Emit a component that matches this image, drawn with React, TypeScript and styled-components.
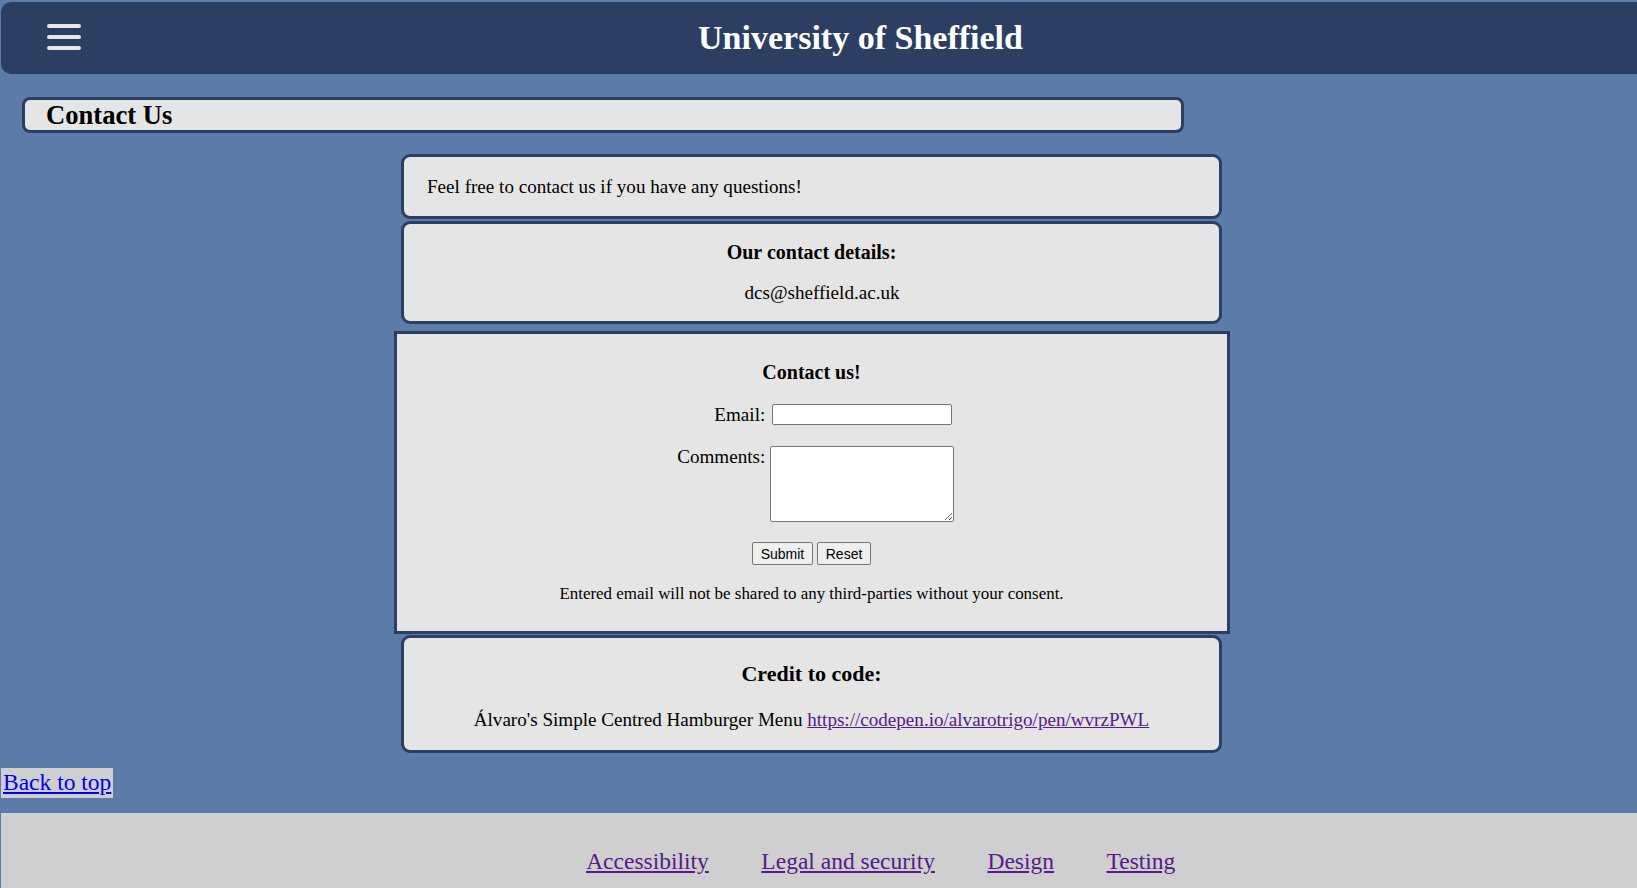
import React from "react";
import styled, { createGlobalStyle } from "styled-components";

const GlobalStyle = createGlobalStyle`
  html {
    background: #5b7ca8;
  }
  body {
    margin: 2px 0 0 1px;
    background: #5b7ca8;
    font-family: "Liberation Serif", "Times New Roman", serif;
    font-size: 19.1px;
    color: #000;
  }
  ::-webkit-scrollbar {
    width: 7px;
    height: 7px;
    background: #f0f0f0;
  }
  ::-webkit-scrollbar-thumb {
    background: #c2c2c2;
    border: 1px solid #f0f0f0;
  }
  ::-webkit-scrollbar-corner {
    background: #f0f0f0;
  }
`;

const Header = styled.header`
  display: grid;
  grid-template-columns: 1fr auto 1fr;
  align-items: center;
  box-sizing: border-box;
  width: calc(100% + 83px);
  height: 72px;
  padding: 0 46px;
  background: #2c3e61;
  border-radius: 10px;
`;

const Burger = styled.div`
  justify-self: start;
  display: flex;
  flex-direction: column;
  gap: 7.5px;
  margin-top: -2px;
`;

const BurgerBar = styled.span`
  display: block;
  width: 34px;
  height: 3.5px;
  border-radius: 2px;
  background: #e8e8e8;
`;

const SiteTitle = styled.h1`
  margin: 0;
  font-size: 34px;
  font-weight: bold;
  color: #ffffff;
  white-space: nowrap;
`;

const PageTitle = styled.h2`
  box-sizing: border-box;
  width: 1162px;
  height: 36px;
  margin: 23px 0 0 21px;
  padding-left: 21px;
  border: 3px solid #2c3e61;
  border-radius: 8px;
  background: #e5e5e5;
  font-size: 26.6px;
  line-height: 30px;
  font-weight: bold;
`;

const Column = styled.main`
  display: flex;
  flex-direction: column;
  align-items: center;
  margin-top: 21px;
  padding-right: 15px;
`;

const Card = styled.section<{ $align?: "left" | "center"; $pad: string; $gap?: number }>`
  box-sizing: border-box;
  width: 821px;
  margin-top: ${(p) => p.$gap ?? 0}px;
  padding: ${(p) => p.$pad};
  border: 3px solid #2c3e61;
  border-radius: 9px;
  background: #e5e5e5;
  text-align: ${(p) => p.$align ?? "center"};
`;

const Text = styled.p<{ $top?: number; $indent?: number }>`
  margin: ${(p) => p.$top ?? 0}px 0 0;
  padding-left: ${(p) => p.$indent ?? 0}px;
  line-height: 22px;
`;

const CardHeading = styled.h3<{ $size: number }>`
  margin: 0;
  font-size: ${(p) => p.$size}px;
  line-height: ${(p) => Math.round(p.$size * 1.15 * 10) / 10}px;
  font-weight: bold;
`;

const FormBox = styled.form`
  box-sizing: border-box;
  width: 836px;
  margin-top: 7px;
  padding: 27px 0 28px;
  border: 3px solid #2c3e61;
  background: #e5e5e5;
  display: flex;
  flex-direction: column;
  align-items: center;
`;

const Fields = styled.div`
  display: grid;
  grid-template-columns: 89px 184px;
  column-gap: 4.5px;
  row-gap: 20.7px;
  margin: 19.8px 0 0 7px;
`;

const Label = styled.label`
  justify-self: end;
  line-height: 22px;
  white-space: nowrap;
`;

const TextInput = styled.input`
  justify-self: center;
  box-sizing: border-box;
  width: 180px;
  height: 21px;
  margin: 0.6px 0 0;
  padding: 1px 2px;
  border: 1px solid #767676;
  border-radius: 2px;
  background: #fff;
`;

const TextArea = styled.textarea`
  justify-self: center;
  box-sizing: border-box;
  width: 184px;
  height: 75.4px;
  margin: 0;
  border: 1px solid #767676;
  border-radius: 2px;
  background: #fff;
`;

const Buttons = styled.div`
  display: flex;
  gap: 4.5px;
  margin-top: 20.6px;
`;

const Button = styled.button`
  box-sizing: border-box;
  height: 22.4px;
  padding: 1px 7.5px;
  border: 1px solid #767676;
  border-radius: 2px;
  background: #efefef;
  font-family: "Liberation Sans", Arial, sans-serif;
  font-size: 14px;
  color: #000;
`;

const Note = styled.p`
  margin: 19.3px 0 0;
  font-size: 16.95px;
  line-height: 19.4px;
`;

const VisitedLink = styled.a`
  color: #551a8b;
  text-decoration: underline;
`;

const BackRow = styled.div`
  margin-top: 15px;
`;

const BackLink = styled.a`
  display: inline-block;
  padding: 1.5px 2px;
  background: #cfcfcf;
  color: #0000ee;
  font-size: 23.5px;
  line-height: 27px;
  text-decoration: underline;
`;

const Footer = styled.footer`
  margin-top: 15px;
  padding: 35px 0 42px 123.5px;
  background: #cfcfcf;
  display: flex;
  justify-content: center;
  gap: 52.5px;
`;

const FooterLink = styled.a`
  color: #551a8b;
  font-size: 23.5px;
  line-height: 27px;
  text-decoration: underline;
`;

export default function App() {
  return (
    <>
      <GlobalStyle />
      <Header id="top">
        <Burger aria-label="Menu">
          <BurgerBar />
          <BurgerBar />
          <BurgerBar />
        </Burger>
        <SiteTitle>University of Sheffield</SiteTitle>
        <span />
      </Header>

      <PageTitle>Contact Us</PageTitle>

      <Column>
        <Card $align="left" $pad="18.5px 23px">
          <Text>Feel free to contact us if you have any questions!</Text>
        </Card>

        <Card $pad="17px 0 16.5px" $gap={2}>
          <CardHeading $size={20}>Our contact details:</CardHeading>
          <Text $top={18.4} $indent={21}>dcs@sheffield.ac.uk</Text>
        </Card>

        <FormBox onSubmit={(e) => e.preventDefault()}>
          <CardHeading $size={20}>Contact us!</CardHeading>
          <Fields>
            <Label htmlFor="email">Email:</Label>
            <TextInput id="email" type="email" />
            <Label htmlFor="comments">Comments:</Label>
            <TextArea id="comments" />
          </Fields>
          <Buttons>
            <Button type="submit">Submit</Button>
            <Button type="reset">Reset</Button>
          </Buttons>
          <Note>Entered email will not be shared to any third-parties without your consent.</Note>
        </FormBox>

        <Card $pad="23px 0 19px" $gap={0.5}>
          <CardHeading $size={22}>Credit to code:</CardHeading>
          <Text $top={22.4}>
            Álvaro's Simple Centred Hamburger Menu{" "}
            <VisitedLink href="#">https://codepen.io/alvarotrigo/pen/wvrzPWL</VisitedLink>
          </Text>
        </Card>
      </Column>

      <BackRow>
        <BackLink href="#top">Back to top</BackLink>
      </BackRow>

      <Footer>
        <FooterLink href="#">Accessibility</FooterLink>
        <FooterLink href="#">Legal and security</FooterLink>
        <FooterLink href="#">Design</FooterLink>
        <FooterLink href="#">Testing</FooterLink>
      </Footer>
    </>
  );
}
